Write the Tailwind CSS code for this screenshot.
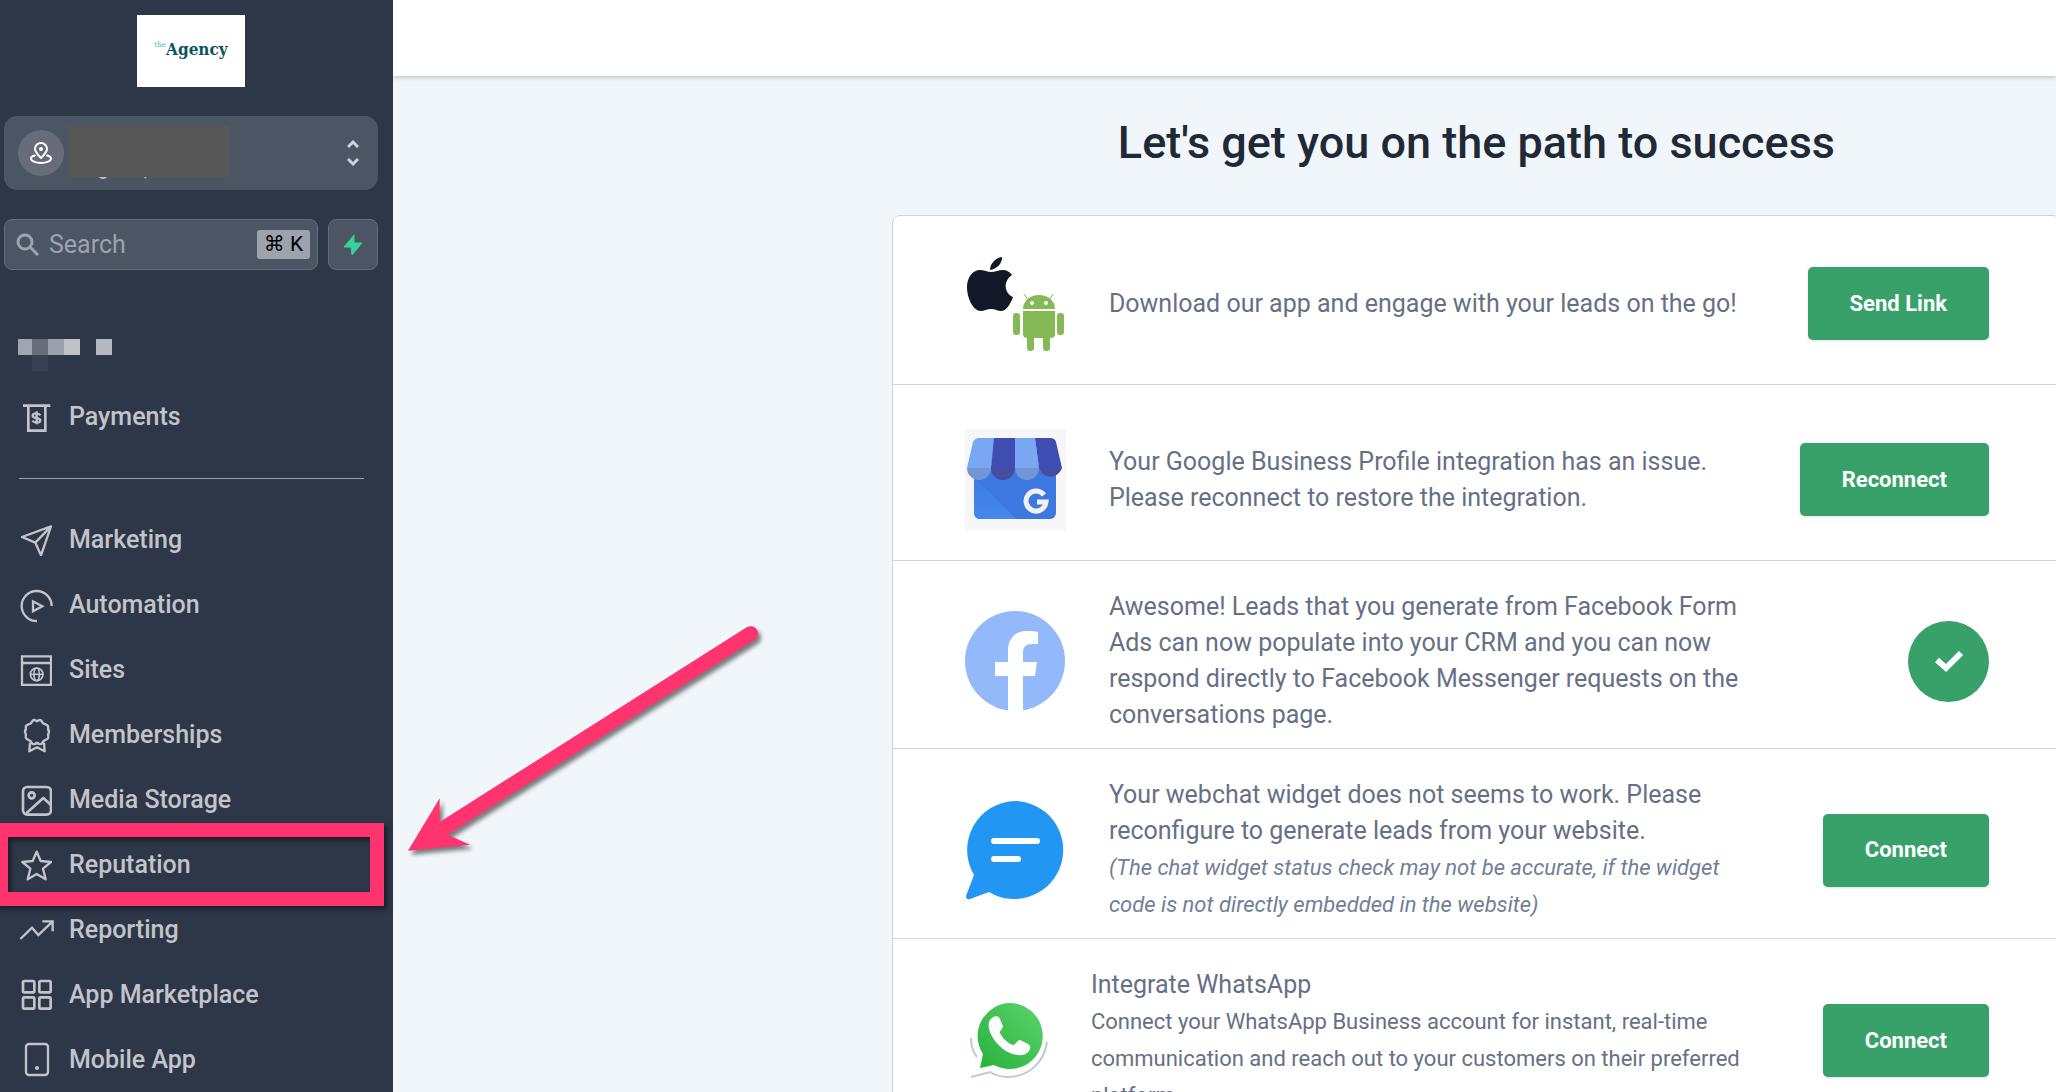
<!DOCTYPE html>
<html lang="en">
<head>
  <meta charset="UTF-8">
  <meta name="viewport" content="width=device-width, initial-scale=1.0">
  <title>Launchpad</title>
  <script src="https://cdn.jsdelivr.net/npm/@tailwindcss/browser@4"></script>
</head>
<body class="relative flex h-screen overflow-hidden bg-[#f1f6fa] font-['Roboto',sans-serif]">

  <!-- Sidebar -->
  <aside class="flex w-[393px] shrink-0 flex-col bg-[#2d3748] text-[#c3c4ca]">
    <a href="#" class="mt-[15px] ml-[137px] flex h-[72px] w-[108px] items-start justify-center bg-white pt-[22px] font-['DejaVu_Serif_Condensed','DejaVu_Serif',serif] leading-6 text-[#0b5560]">
      <span class="text-[8px] leading-4 text-[#5bb5b0]">the</span><span class="text-[17px] font-bold">Agency</span>
    </a>

    <button class="relative mt-[29px] mr-[15px] ml-1 flex h-[75px] items-center rounded-[13px] bg-[#4b5563] pl-[14px] pr-[19px]" aria-label="Switch account">
      <span class="flex size-[46px] items-center justify-center rounded-full bg-[#666c79]">
        <svg class="size-6" viewBox="0 0 24 24" fill="none" stroke="#fff" stroke-width="2" stroke-linecap="round" stroke-linejoin="round">
          <path d="M12 17c-3.500-3.500-6-6-6-9a6 6 0 0 1 12 0c0 3-2.500 5.500-6 9z"/>
          <circle cx="12" cy="8" r="1"/>
          <path d="M6 14.500c-2.500.5-4 1.500-4 3C2 20 6.500 22 12 22s10-2 10-4.500c0-1.500-1.500-2.500-4-3"/>
        </svg>
      </span>
      <svg class="ml-1 h-[53px] w-[161px]" viewBox="0 0 161 53" fill="none" stroke="#b9bcc2" stroke-width="2">
        <path d="M31 50q4 4 8 0M78 50l-1 2"/>
        <path fill="#575757" stroke="none" d="M0 0h161v51H0z"/>
      </svg>
      <svg class="ml-auto h-[26px] w-3" viewBox="0 0 12 26" fill="none" stroke="#d0d1d4" stroke-width="3">
        <path d="M1 7l5-5 5 5M1 19l5 5 5-5"/>
      </svg>
    </button>

    <div class="mt-[29px] mr-[15px] ml-1 flex gap-[10px]">
      <label class="flex h-[51px] min-w-0 flex-1 items-center rounded-lg border border-[#646c7a] bg-[#4b5563] pr-[7px] pl-[11px]">
        <svg class="size-6 shrink-0" viewBox="0 0 24 24" fill="none" stroke="#9ca3af" stroke-width="3">
          <circle cx="9" cy="9" r="7"/><path d="M14 14l8 8"/>
        </svg>
        <input type="text" placeholder="Search" aria-label="Search" class="ml-[9px] min-w-0 flex-1 bg-transparent text-[25px] outline-none placeholder:text-[#9ca3af]">
        <kbd class="flex h-[29px] w-[53px] shrink-0 items-center justify-center rounded-[3px] bg-[#9ca3af] font-['Roboto','DejaVu_Sans',sans-serif] text-[21px] text-black">⌘ K</kbd>
      </label>
      <button class="flex h-[51px] w-[50px] items-center justify-center rounded-lg border border-[#646c7a] bg-[#4b5563]" aria-label="Quick actions">
        <svg class="h-[22px] w-5" viewBox="0 0 20 22" fill="#34d399" stroke="#34d399" stroke-linejoin="round"><path d="M11 1L1 13h7l1 8L19 9h-8z"/></svg>
      </button>
    </div>

    <div class="mt-[69px] ml-[18px] flex h-8 items-start">
      <span class="h-4 w-[14px] bg-[#9fa6b1]"></span>
      <span class="h-4 w-4 bg-[#676d79] shadow-[0_16px_0_#394252]"></span>
      <span class="h-4 w-4 bg-[#9aa1ad]"></span>
      <span class="h-4 w-4 bg-[#bfc3c8]"></span>
      <span class="ml-4 h-4 w-4 bg-[#b4b8c3]"></span>
    </div>

    <nav class="mt-[13px] flex flex-col text-[25px] font-medium">
      <a href="#" class="flex h-[65px] items-center gap-[17px] pl-5">
        <svg class="size-8" viewBox="60 335 96 96" fill="none" stroke="currentColor" stroke-width="8">
          <path d="M69 349h82M85 349v75h51v-75"/>
          <path stroke-width="7" d="M121 378c-3-5-8-6-12-6-7 0-11 3-11 7 0 10 23 5 23 14 0 4-5 7-11 7s-10-2-13-6M110 366v39"/>
        </svg>
        Payments
      </a>
      <hr class="mt-[29px] mr-[29px] mb-[28px] ml-[19px] border-[#9ca3af]">
      <a href="#" class="flex h-[65px] items-center gap-[17px] pl-5">
        <svg class="size-8" viewBox="60 704 96 96" fill="none" stroke="currentColor" stroke-width="7" stroke-linejoin="round">
          <path d="M153 711L66 743l40 17 17 38zM153 711l-47 49"/>
        </svg>
        Marketing
      </a>
      <a href="#" class="flex h-[65px] items-center gap-[17px] pl-5">
        <svg class="size-8 overflow-visible" viewBox="60 89 96 96" fill="none" stroke="currentColor" stroke-width="7">
          <path d="M111 185a45 45 0 1 1 44-45M99 126v30l28-15z"/>
        </svg>
        Automation
      </a>
      <a href="#" class="flex h-[65px] items-center gap-[17px] pl-5">
        <svg class="size-8" viewBox="60 284 96 96" fill="none" stroke="currentColor" stroke-width="7">
          <path d="M66 291h87v86H66zM66 311h87"/>
          <g stroke-width="5"><circle cx="110" cy="345" r="19"/><ellipse cx="110" cy="345" rx="8" ry="19"/><path d="M91 345h38"/></g>
        </svg>
        Sites
      </a>
      <a href="#" class="flex h-[65px] items-center gap-[17px] pl-5">
        <svg class="size-8 overflow-visible" viewBox="60 475 96 96" fill="none" stroke="currentColor" stroke-width="7" stroke-linejoin="round">
          <path d="M111 482q8-7 14-1 3 9 12 10 10 3 7 14 6 9 0 17 4 12-6 15-9 3-13 12-7 4-14-3-7 7-14 3-4-9-13-12-10-3-6-15-6-8 0-17-3-11 7-14 9-1 12-10 6-6 14 1z"/>
          <path d="M90 546l-2 26 23-12 23 12-2-26"/>
        </svg>
        Memberships
      </a>
      <a href="#" class="flex h-[65px] items-center gap-[17px] pl-5">
        <svg class="size-8" viewBox="60 670 96 96" fill="none" stroke="currentColor" stroke-width="8" stroke-linejoin="round">
          <rect x="69" y="679" width="84" height="83" rx="13"/><circle cx="95" cy="704" r="9"/><path d="M79 758l51-46 23 21"/>
        </svg>
        Media Storage
      </a>
      <a href="#" class="relative flex h-[65px] items-center gap-[17px] pl-5">
        <svg class="size-8" viewBox="60 86 96 96" fill="none" stroke="currentColor" stroke-width="7" stroke-linejoin="round">
          <path d="M110 94l12 28 31 3-24 20 8 32-27-16-27 16 8-32-24-20 31-3z"/>
        </svg>
        Reputation
        <span class="absolute -inset-y-[9px] right-[9px] -left-[6px] border-[14px] border-[#ff336d] shadow-[3px_3px_5px_rgba(0,0,0,0.5),inset_3px_3px_5px_rgba(0,0,0,0.5)]"></span>
      </a>
      <a href="#" class="flex h-[65px] items-center gap-[17px] pl-5">
        <svg class="size-8 overflow-visible" viewBox="60 284 96 96" fill="none" stroke="currentColor" stroke-width="7">
          <path d="M61 359l35-34 19 22 43-41M127 306h31v30"/>
        </svg>
        Reporting
      </a>
      <a href="#" class="flex h-[65px] items-center gap-[17px] pl-5">
        <svg class="size-8" viewBox="60 478 96 96" fill="none" stroke="currentColor" stroke-width="8">
          <rect x="69" y="484" width="34" height="34" rx="4"/><rect x="118" y="484" width="34" height="34" rx="4"/>
          <rect x="69" y="533" width="34" height="34" rx="4"/><rect x="118" y="533" width="34" height="34" rx="4"/>
        </svg>
        App Marketplace
      </a>
      <a href="#" class="flex h-[65px] items-center gap-[17px] pl-5">
        <svg class="size-8 overflow-visible" viewBox="60 670 96 96" fill="none" stroke="currentColor" stroke-width="7">
          <rect x="78" y="670" width="66" height="93" rx="9"/><circle cx="111" cy="742" r="6" fill="currentColor" stroke="none"/>
        </svg>
        Mobile App
      </a>
    </nav>
  </aside>

  <!-- Main -->
  <main class="min-w-0 flex-1 overflow-hidden">
    <header class="h-[76px] bg-white shadow-[0_1px_5px_rgba(0,0,0,0.25)]"></header>

    <div class="-mr-[5px] pl-[30%]">
      <h1 class="pt-[37px] pb-[42px] text-center text-[45px] leading-[60px] font-medium text-[#1f2937]">Let's get you on the path to success</h1>

      <div class="divide-y divide-[#cbd5e0] rounded-lg border border-[#cbd5e0] bg-white text-[25px] leading-9 text-[#667085]">
        <section class="flex items-center pt-[21px] pr-[71px] pb-[14px] pl-[72px]">
          <svg class="my-4 h-[101px] w-[101px] shrink-0" viewBox="0 0 101 101">
            <!-- apple -->
            <path fill="#111827" d="M37 4c.5 6-5 12-12 13C25 11 30 5 37 4zM26 19c4 0 8-2 12-2 4 0 7 2 9 5-9 6-8 18 1 22-3 8-7 14-12 14-3 0-6-2-10-2s-7 2-10 2C8 58 2 45 2 34c0-10 6-17 13-17 4 0 8 2 11 2z"/>
            <!-- android -->
            <g fill="#85b955">
              <path d="M58 56a16 14 0 0 1 32 0z"/>
              <path d="M58 58h32v23a4 4 0 0 1-4 4H62a4 4 0 0 1-4-4z"/>
              <rect x="48" y="60" width="7" height="22" rx="3"/><rect x="92" y="60" width="7" height="22" rx="3"/>
              <rect x="62" y="78" width="7" height="20" rx="3"/><rect x="78" y="78" width="7" height="20" rx="3"/>
              <path stroke="#85b955" d="M59 41l4 6M88 41l-4 6"/>
            </g>
            <circle cx="67" cy="50" r="2" fill="#fff"/><circle cx="81" cy="50" r="2" fill="#fff"/>
          </svg>
          <p class="ml-[43px] max-w-[640px]">Download our app and engage with your leads on the go!</p>
          <button class="ml-auto h-[73px] shrink-0 rounded-[5px] bg-[#38a169] px-[42px] text-[22px] font-bold text-white shadow-sm">Send Link</button>
        </section>

        <section class="flex items-center pt-[28px] pr-[71px] pb-[14px] pl-[72px]">
          <svg class="my-4 h-[101px] w-[101px] shrink-0" viewBox="0 0 101 101">
            <defs><linearGradient id="shop" x1="0" y1="0" x2="0" y2="1"><stop offset="0" stop-color="#3f7be3"/><stop offset="1" stop-color="#4488f0"/></linearGradient></defs>
            <path fill="#f6f6f6" d="M0 0h101v101H0z"/>
            <rect x="9" y="36" width="82" height="54" rx="6" fill="#3c78e0"/>
            <path fill="url(#shop)" d="M9 48l42 42H15a6 6 0 0 1-6-6z"/>
            <path fill="#7aa7f3" d="M14 9h16l-4 30a12 12 0 0 1-24 0L8 13q2-4 6-4z"/>
            <path fill="#3f4db3" d="M29 9h21v30a12 12 0 0 1-24 0z"/>
            <path fill="#7aa7f3" d="M50 9h20l4 30a12 12 0 0 1-24 0z"/>
            <path fill="#3f4db3" d="M70 9h15q5 0 6 4l6 26a12 12 0 0 1-23 0z"/>
            <path fill="#555" fill-opacity=".2" d="M2 39h95a12 12 0 0 1-23 0 12 12 0 0 1-24 0 12 12 0 0 1-24 0 12 12 0 0 1-24 0z"/>
            <path fill="none" stroke="#f1f1f1" stroke-width="5" d="M79 66a10 10 0 1 0 2 7h-9"/>
          </svg>
          <p class="ml-[43px] max-w-[640px]">Your Google Business Profile integration has an issue. Please reconnect to restore the integration.</p>
          <button class="ml-auto h-[73px] shrink-0 rounded-[5px] bg-[#38a169] px-[42px] text-[22px] font-bold text-white shadow-sm">Reconnect</button>
        </section>

        <section class="flex items-center pt-[28px] pr-[71px] pb-[15px] pl-[72px]">
          <svg class="h-[101px] w-[101px] shrink-0" viewBox="0 0 101 101">
            <circle cx="50" cy="50" r="50" fill="#93b9fa"/>
            <path fill="#fff" d="M43 101V65H30V51h13V39c0-12 8-19 18-19 5 0 9 0 12 1v12h-6c-6 0-9 3-9 8v10h14l-2 14H58v36z"/>
          </svg>
          <p class="ml-[43px] max-w-[640px]">Awesome! Leads that you generate from Facebook Form Ads can now populate into your CRM and you can now respond directly to Facebook Messenger requests on the conversations page.</p>
          <span class="ml-auto flex size-[81px] shrink-0 items-center justify-center rounded-full bg-[#38a169]">
            <svg class="h-6 w-8" viewBox="0 0 32 24" fill="none" stroke="#fff" stroke-width="6"><path stroke-linejoin="miter" d="M4 11l9 8L28 4"/></svg>
          </span>
        </section>

        <section class="flex items-center pt-[28px] pr-[71px] pb-[15px] pl-[72px]">
          <svg class="h-[101px] w-[101px] shrink-0" viewBox="0 0 101 101">
            <path fill="#2296f3" d="M50 1a49 49 0 1 1-26 91L5 99q-4 1-4-3l8-21A49 49 0 0 1 50 1z"/>
            <path stroke="#fff" stroke-width="6" stroke-linecap="round" d="M29 41h43M29 59h24"/>
          </svg>
          <div class="ml-[43px] max-w-[640px]">
            <p>Your webchat widget does not seems to work. Please reconfigure to generate leads from your website.</p>
            <p class="text-[22px] leading-[37px] text-[#718096] italic">(The chat widget status check may not be accurate, if the widget code is not directly embedded in the website)</p>
          </div>
          <button class="ml-auto h-[73px] shrink-0 rounded-[5px] bg-[#38a169] px-[42px] text-[22px] font-bold text-white shadow-sm">Connect</button>
        </section>

        <section class="flex items-center pt-[28px] pr-[71px] pb-[15px] pl-[72px]">
          <svg class="h-[86px] w-[83px] shrink-0" viewBox="0 0 83 86">
            <defs><linearGradient id="wa" x1="1" y1="0" x2="0" y2="1"><stop offset="0" stop-color="#5dd46b"/><stop offset="1" stop-color="#27b03c"/></linearGradient></defs>
            <path fill="none" stroke="#c3c9d1" stroke-width="2" d="M6 40q0 12 6 19M6 79l19-5q8 5 18 5c20 0 36-14 39-35"/>
            <path fill="url(#wa)" d="M45 5a33 33 0 1 1-16 62l-14 3 3-14A33 33 0 0 1 45 5z"/>
            <path fill="#fff" d="M27 20c3-3 7-2 8 1l3 7c0 3-4 5-3 7 3 6 8 10 13 12 3 0 4-5 7-5l8 4c4 2 2 7-1 9-5 4-14 2-21-2-8-5-15-14-17-22-1-5 0-9 3-11z"/>
          </svg>
          <div class="ml-[43px] max-w-[660px]">
            <h2>Integrate WhatsApp</h2>
            <p class="text-[22px] leading-[37px]">Connect your WhatsApp Business account for instant, real-time communication and reach out to your customers on their preferred platform.</p>
          </div>
          <button class="ml-auto h-[73px] shrink-0 rounded-[5px] bg-[#38a169] px-[42px] text-[22px] font-bold text-white shadow-sm">Connect</button>
        </section>
      </div>
    </div>
  </main>

  <!-- Arrow pointing at Reputation -->
  <svg class="pointer-events-none absolute top-[610px] left-[390px] h-[260px] w-[390px] drop-shadow-[3px_4px_2px_rgba(0,0,0,0.5)]" viewBox="0 0 1170 780" fill="#ff336d">
    <path d="M54 722l95-157v71L1070 52a22 22 0 0 1 24 37L173 674l67 30z"/>
  </svg>
</body>
</html>
